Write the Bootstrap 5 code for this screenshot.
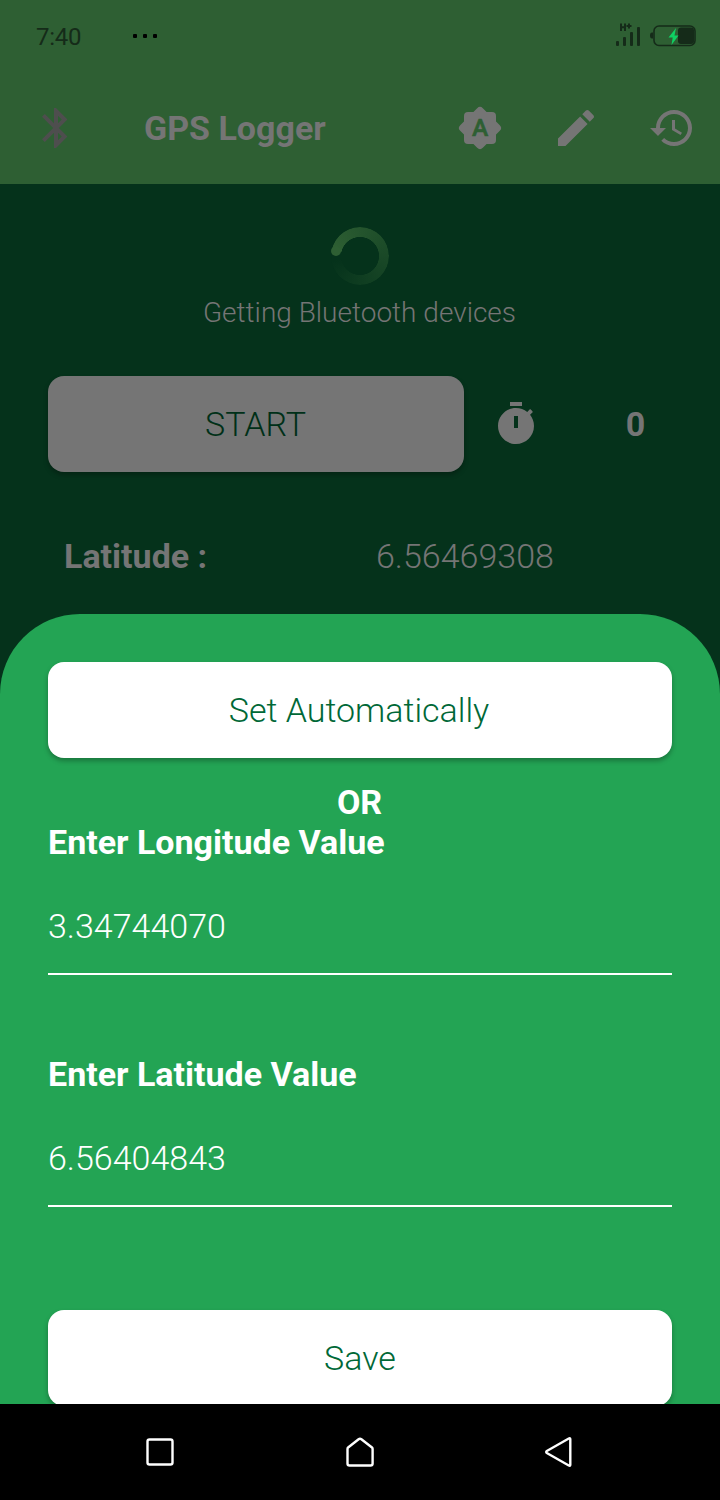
<!DOCTYPE html>
<html lang="en">
<head>
<meta charset="utf-8">
<meta name="viewport" content="width=device-width, initial-scale=1">
<title>GPS Logger</title>
<link href="https://cdn.jsdelivr.net/npm/bootstrap@5.3.0/dist/css/bootstrap.min.css" rel="stylesheet">
<style>
  body { font-family: Roboto, "Liberation Sans", sans-serif; font-size: 34px; line-height: 40px; font-weight: 300; background: #05321b; color: #757575; }
  svg { display: block; flex-shrink: 0; }
  .phone { width: 720px; height: 1500px; }
  .app-top { height: 184px; background: #2e5f33; }
  .status { height: 72px; padding: 0 24px 0 36px; color: #152b19; font-size: 24px; font-weight: 400; }
  .clock { width: 45px; padding-top: 2px; letter-spacing: -.3px; }
  .dots { gap: 6px; margin-left: 52px; }
  .dots span { width: 4px; height: 4px; background: #000; border-radius: 1px; }
  .toolbar { height: 112px; padding: 0 24px 0 32px; }
  .app-title { margin: 0 0 0 64px; font-size: 34px; line-height: 40px; font-weight: 700; }
  .tools { gap: 48px; }
  .content-area { height: 430px; padding: 43px 48px 0; }
  .spinner-ring { position: relative; width: 58px; height: 58px; margin: 0 auto; }
  .spinner-ring::before { content: ""; display: block; width: 58px; height: 58px; border-radius: 50%;
    background: conic-gradient(from 282deg, #2e5f33, #05321b 338deg, #05321b);
    -webkit-mask: radial-gradient(circle, transparent 18.7px, #000 19.3px); mask: radial-gradient(circle, transparent 18.7px, #000 19.3px); }
  .spinner-ring::after { content: ""; position: absolute; left: 0; top: 19px; width: 10px; height: 10px; border-radius: 50%; background: #2e5f33; }
  .loading { font-size: 28px; line-height: 32px; margin-top: 12px; padding-right: 1px; }
  .controls { margin-top: 47px; }
  .btn-app { height: 96px; border: 0; border-radius: 16px; padding: 0 2px 0 0; font-size: 34px; line-height: 40px; font-weight: 300; background: #fff; color: #006837; box-shadow: 0 3px 5px rgba(0,0,0,.28); }
  .btn-app.dimmed { width: 416px; background: #757575; color: #003018; padding-right: 1px; }
  .timer-icon { margin-left: 28px; }
  .count { width: 40px; margin-left: 75.5px; font-weight: 700; }
  .reading { margin: 64px 0 0 16px; }
  .reading b { width: 312px; font-weight: 700; }
  .sheet { height: 790px; padding: 48px 48px 0; border-radius: 80px 80px 0 0; background: #23a454; color: #fff; overflow: hidden; }
  .sheet .heading { font-weight: 700; }
  .or-label { margin-top: 24px; padding-right: 1px; }
  .field { height: 105px; margin: 8px 0 79px; border: 0; border-bottom: 2px solid #fff; border-radius: 0; padding: 36px 0 27px; background: none; color: #fff; font-size: 34px; line-height: 40px; font-weight: 300; width: 100%; display: block; }
  .btn-app.save { margin-top: 103px; padding-right: 0; }
  .navkeys { height: 96px; background: #000; padding: 0 136px; }
</style>
</head>
<body>
<div class="phone d-flex flex-column overflow-hidden">
  <header class="app-top">
    <div class="status d-flex align-items-center">
      <span class="clock">7:40</span>
      <div class="dots d-flex"><span></span><span></span><span></span></div>
      <svg class="ms-auto" width="84" height="36" viewBox="612 18 84 36" fill="#152b19">
        <rect x="616" y="41" width="3" height="5" rx="1"/><rect x="623" y="37" width="3" height="9" rx="1"/><rect x="630" y="32" width="3" height="14" rx="1"/><rect x="637" y="27" width="3" height="19" rx="1"/>
        <path d="M621 23.500v7.500M625 23.500v7.500M621 27.300h4M626.500 26h5M629 23.500v5" stroke="#152b19" stroke-width="2"/>
        <path d="M653 32.500h-1q-2 0-2 3t2 3h1z"/>
        <rect x="654" y="26" width="41" height="19.500" rx="5" fill="none" stroke="#152b19" stroke-width="1.600"/>
        <rect x="678" y="27.500" width="16" height="16.500" rx="3"/>
        <path d="M676 28 668.500 37.500h4.200L671.500 45 678.500 35.500h-4z" fill="#0fd063"/>
      </svg>
    </div>
    <nav class="toolbar d-flex align-items-center">
      <svg width="48" height="48" viewBox="0 0 24 24" fill="#4e4e4e"><path d="M17.710 7.710 12 2h-1v7.590L6.410 5 5 6.410 10.590 12 5 17.590 6.410 19 11 14.410V22h1l5.710-5.710L13.410 12zM13 5.830l1.880 1.880L13 9.590zm1.880 10.460L13 18.170v-3.760z"/></svg>
      <h1 class="app-title">GPS Logger</h1>
      <div class="tools d-flex ms-auto">
        <svg width="48" height="48" viewBox="0 0 48 48" fill="#757575"><rect x="8" y="8" width="32" height="32" rx="4"/><rect x="8" y="8" width="32" height="32" rx="4" transform="rotate(45 24 24)"/><text x="24" y="32" text-anchor="middle" font-size="24.500" font-weight="500" fill="#2e5f33" stroke="#2e5f33" stroke-width=".6" stroke-linejoin="round">A</text></svg>
        <svg width="48" height="48" viewBox="0 0 24 24" fill="#757575"><path d="M3 17.250V21h3.750L17.810 9.940l-3.750-3.750zM20.710 7.040c.39-.39.39-1.020 0-1.410l-2.340-2.340c-.39-.39-1.020-.39-1.410 0l-1.830 1.830 3.750 3.750z"/></svg>
        <svg width="48" height="48" viewBox="0 0 24 24" fill="#757575"><path d="M13 3c-4.970 0-9 4.030-9 9H1l3.890 3.890.07.14L9 12H6c0-3.870 3.130-7 7-7s7 3.130 7 7-3.130 7-7 7c-1.930 0-3.680-.79-4.940-2.060l-1.420 1.420C8.270 19.990 10.510 21 13 21c4.970 0 9-4.030 9-9s-4.030-9-9-9zm-1 5v5l4.280 2.540.72-1.210-3.500-2.080V8z"/></svg>
      </div>
    </nav>
  </header>

  <main class="content-area">
    <div class="spinner-ring"></div>
    <div class="loading text-center">Getting Bluetooth devices</div>
    <div class="controls d-flex align-items-center">
      <button class="btn btn-app dimmed">START</button>
      <svg class="timer-icon" width="48" height="48" viewBox="0 0 24 24" fill="#757575"><path d="M15 1H9v2h6zM19.030 7.390l1.420-1.420c-.43-.51-.9-.99-1.410-1.410l-1.420 1.420C16.070 4.740 14.120 4 12 4c-4.970 0-9 4.030-9 9s4.020 9 9 9 9-4.030 9-9c0-2.120-.74-4.070-1.970-5.610zM13 14h-2V8h2z"/></svg>
      <span class="count text-center">0</span>
    </div>
    <div class="reading d-flex"><b>Latitude :</b><span>6.56469308</span></div>
  </main>

  <section class="sheet">
    <button class="btn btn-app w-100 d-block">Set Automatically</button>
    <div class="or-label heading text-center">OR</div>
    <label class="heading d-block" for="lon">Enter Longitude Value</label>
    <input class="field" id="lon" value="3.34744070">
    <label class="heading d-block" for="lat">Enter Latitude Value</label>
    <input class="field" id="lat" value="6.56404843">
    <button class="btn btn-app save w-100 d-block">Save</button>
  </section>

  <footer class="navkeys d-flex justify-content-between align-items-center">
    <svg width="48" height="48" viewBox="0 0 48 48" fill="none" stroke="#fff" stroke-width="2.400" stroke-linejoin="round"><rect x="11.500" y="11.500" width="25" height="25" rx="2"/></svg>
    <svg width="48" height="48" viewBox="0 0 48 48" fill="none" stroke="#fff" stroke-width="2.400" stroke-linejoin="round"><path d="M22.600 11.200q1.400-1 2.800 0L36 19.500q.6.500.6 1.500v14.500q0 2-2 2H13.500q-2 0-2-2V21q0-1 .6-1.500z"/></svg>
    <svg width="48" height="48" viewBox="0 0 48 48" fill="none" stroke="#fff" stroke-width="2.400" stroke-linejoin="round"><path d="M32.800 10.500q1.500-.8 1.500.8v25.400q0 1.600-1.500.8L10.800 25q-1.200-1 0-2z"/></svg>
  </footer>
</div>
<script src="https://cdn.jsdelivr.net/npm/bootstrap@5.3.0/dist/js/bootstrap.bundle.min.js"></script>
</body>
</html>
